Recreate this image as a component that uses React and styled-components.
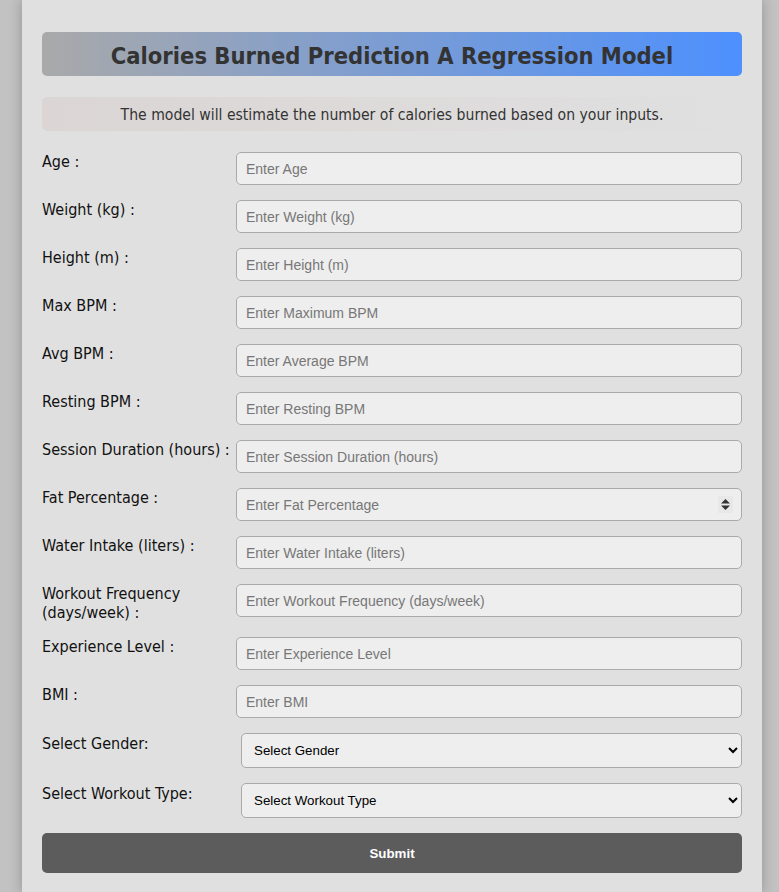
import React from "react";
import styled, { createGlobalStyle } from "styled-components";

const GlobalStyle = createGlobalStyle`
  body {
    margin: 0;
    background: #c2c2c2;
    font-family: "DejaVu Sans Condensed", "DejaVu Sans", sans-serif;
  }
`;

const Page = styled.div`
  padding: 0 17px 0 22px;
`;

const Card = styled.div`
  width: 740px;
  box-sizing: border-box;
  padding: 32px 20px 20px;
  background: #e0e0e0;
  box-shadow: 0 0 12px rgba(0, 0, 0, 0.25);
`;

const Header = styled.h1`
  margin: 0;
  height: 44px;
  box-sizing: border-box;
  padding-top: 3px;
  display: flex;
  align-items: center;
  justify-content: center;
  border-radius: 5px;
  background: linear-gradient(to right, #a9a9a9, #4d90fe);
  color: #333;
  font-size: 23.5px;
  font-weight: bold;
`;

const Subtitle = styled.p`
  margin: 21px 0 21px;
  height: 34px;
  box-sizing: border-box;
  padding-top: 2px;
  display: flex;
  align-items: center;
  justify-content: center;
  border-radius: 5px;
  background: linear-gradient(to right, #dbd5d5, #e0e0e0);
  color: #333;
  font-size: 15.6px;
`;

const Form = styled.form`
  display: flex;
  flex-direction: column;
  gap: 15px;
`;

const Row = styled.div`
  display: flex;
  align-items: flex-start;
`;

const Label = styled.label`
  width: ${(p) => (p.$wide ? "199px" : "194px")};
  flex-shrink: 0;
  padding-top: ${(p) => (p.$wide ? "2px" : "1px")};
  color: #111;
  font-size: 16px;
  line-height: 18.5px;
`;

const FieldWrap = styled.div`
  position: relative;
  flex: 1;
`;

const Input = styled.input`
  width: 100%;
  height: 33px;
  box-sizing: border-box;
  padding: 0 9px;
  border: 1px solid #aaa;
  border-radius: 5px;
  background: #eee;
  font-family: "Liberation Sans", Arial, sans-serif;
  font-size: 14px;
  color: #222;
  outline: none;

  &::placeholder {
    color: #777;
  }
  &::-webkit-inner-spin-button,
  &::-webkit-outer-spin-button {
    -webkit-appearance: none;
    margin: 0;
  }
`;

const Spinner = styled.span`
  position: absolute;
  right: 9px;
  top: 8px;
  width: 15px;
  height: 17px;
  display: flex;
  align-items: center;
  justify-content: center;
  background: #e8e8e8;
`;

const Select = styled.select`
  width: 100%;
  height: 35px;
  box-sizing: border-box;
  padding: 0 8px;
  border: 1px solid #aaa;
  border-radius: 5px;
  background: #eee;
  font-family: "Liberation Sans", Arial, sans-serif;
  font-size: 13.33px;
  color: #000;
`;

const SubmitButton = styled.button`
  height: 40px;
  border: none;
  border-radius: 5px;
  background: #5c5c5c;
  color: #fff;
  font-family: "Liberation Sans", Arial, sans-serif;
  font-size: 13.33px;
  font-weight: 600;
`;

const fields = [
  ["Age :", "Enter Age"],
  ["Weight (kg) :", "Enter Weight (kg)"],
  ["Height (m) :", "Enter Height (m)"],
  ["Max BPM :", "Enter Maximum BPM"],
  ["Avg BPM :", "Enter Average BPM"],
  ["Resting BPM :", "Enter Resting BPM"],
  ["Session Duration (hours) :", "Enter Session Duration (hours)"],
  ["Fat Percentage :", "Enter Fat Percentage", true],
  ["Water Intake (liters) :", "Enter Water Intake (liters)"],
  ["Workout Frequency (days/week) :", "Enter Workout Frequency (days/week)"],
  ["Experience Level :", "Enter Experience Level"],
  ["BMI :", "Enter BMI"],
];

const SpinIcon = () => (
  <svg width="9" height="11" viewBox="0 0 9 11">
    <path d="M4.5 0 L9 4.5 H0 Z M0 6.5 H9 L4.5 11 Z" fill="#333" />
  </svg>
);

export default function App() {
  return (
    <Page>
      <GlobalStyle />
      <Card>
        <Header>Calories Burned Prediction A Regression Model</Header>
        <Subtitle>
          The model will estimate the number of calories burned based on your
          inputs.
        </Subtitle>
        <Form onSubmit={(e) => e.preventDefault()}>
          {fields.map(([label, placeholder, spin]) => (
            <Row key={label}>
              <Label>{label}</Label>
              <FieldWrap>
                <Input
                  type={spin ? "number" : "text"}
                  placeholder={placeholder}
                />
                {spin && (
                  <Spinner>
                    <SpinIcon />
                  </Spinner>
                )}
              </FieldWrap>
            </Row>
          ))}
          <Row>
            <Label $wide>Select Gender:</Label>
            <FieldWrap>
              <Select defaultValue="">
                <option value="">Select Gender</option>
                <option value="Male">Male</option>
                <option value="Female">Female</option>
              </Select>
            </FieldWrap>
          </Row>
          <Row>
            <Label $wide>Select Workout Type:</Label>
            <FieldWrap>
              <Select defaultValue="">
                <option value="">Select Workout Type</option>
                <option value="Cardio">Cardio</option>
                <option value="HIIT">HIIT</option>
                <option value="Strength">Strength</option>
                <option value="Yoga">Yoga</option>
              </Select>
            </FieldWrap>
          </Row>
          <SubmitButton type="submit">Submit</SubmitButton>
        </Form>
      </Card>
    </Page>
  );
}
